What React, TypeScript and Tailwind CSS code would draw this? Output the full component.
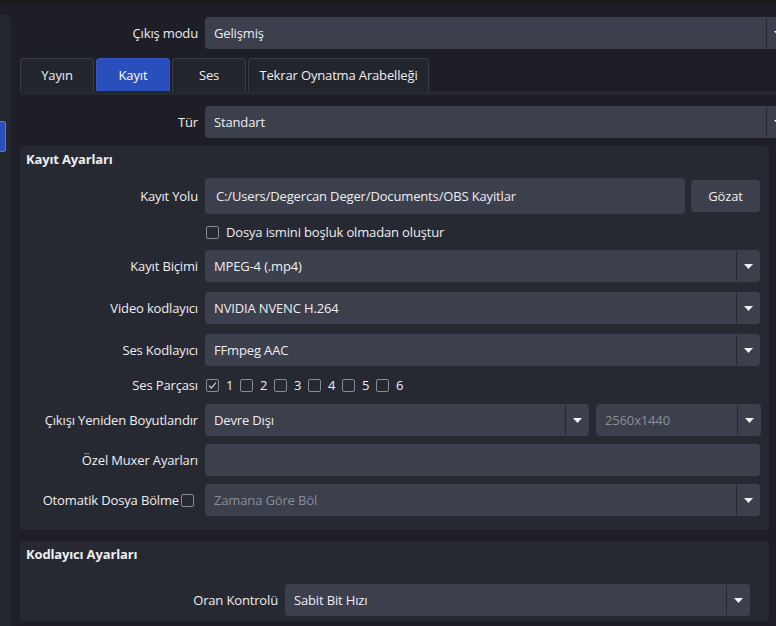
import React from "react";

const FONT = "font-['Open_Sans','Noto_Sans',sans-serif]";

function Arrow() {
  return (
    <svg width="9" height="5" viewBox="0 0 9 5">
      <path d="M0 0 H9 L4.5 5 Z" fill="#f2f2f4" />
    </svg>
  );
}

function Select({
  value,
  width,
  muted = false,
}: {
  value: string;
  width: string;
  muted?: boolean;
}) {
  return (
    <div className={`${width} h-[32px] shrink-0 rounded-[4px] bg-[#3c3f4c] flex items-center`}>
      <span className={`flex-1 pl-[9px] truncate ${muted ? "text-[#8b8e98]" : "text-[#eeeef0]"}`}>
        {value}
      </span>
      <div className="w-[24px] h-[30px] border-l border-[#262830] flex items-center justify-center">
        <Arrow />
      </div>
    </div>
  );
}

function Field({ width, value = "" }: { width: string; value?: string }) {
  return (
    <div className={`${width} h-[32px] shrink-0 rounded-[4px] bg-[#3c3f4c] flex items-center pl-[11px]`}>
      {value}
    </div>
  );
}

function Check({ checked = false }: { checked?: boolean }) {
  return (
    <div className="w-[13px] h-[13px] shrink-0 rounded-[2px] border border-[#8a8c95] flex items-center justify-center">
      {checked && (
        <svg width="11" height="11" viewBox="0 0 11 11">
          <path d="M2 5.6 L4.4 8 L9 2.6" fill="none" stroke="#c9cacf" strokeWidth="1.2" />
        </svg>
      )}
    </div>
  );
}

function Row({
  label,
  labelWidth = "w-[178px]",
  children,
  height = "h-[32px]",
  className = "",
}: {
  label: React.ReactNode;
  labelWidth?: string;
  children: React.ReactNode;
  height?: string;
  className?: string;
}) {
  return (
    <div className={`flex items-center shrink-0 ${height} ${className}`}>
      <div className={`${labelWidth} shrink-0 flex justify-end items-center`}>{label}</div>
      <div className="ml-[7px] flex items-center gap-[6px]">{children}</div>
    </div>
  );
}

function Tab({ label, active = false, width }: { label: string; active?: boolean; width: string }) {
  return (
    <div
      className={`${width} h-[33px] rounded-t-[4px] flex items-center justify-center ${
        active
          ? "bg-[#2a4fbd] border border-b-0 border-[#3556c4] text-white"
          : "bg-[#23252d] border border-b-0 border-[#3a3d48] text-[#eeeef0]"
      }`}
    >
      {label}
    </div>
  );
}

export default function App() {
  const tracks = ["1", "2", "3", "4", "5", "6"];
  return (
    <div
      className={`w-[776px] h-[626px] overflow-hidden bg-[#1e1f26] text-[#eeeef0] text-[13px] leading-[18px] tracking-[-0.15px] ${FONT} flex flex-col`}
    >
      <div className="h-[4px] shrink-0 bg-[#1a1d1e]" />
      <div className="flex flex-1 min-h-0">
        {/* sidebar edge with the selected page marker */}
        <aside className="w-[11px] shrink-0 mt-[11px] bg-[#25272f] rounded-tr-[4px]">
          <div className="mt-[106px] w-[6px] h-[31px] bg-[#2a4fbd] border border-l-0 border-[#5677de] rounded-r-[3px]" />
        </aside>

        <main className="w-[779px] shrink-0 pl-[9px] flex flex-col">
          {/* output mode */}
          <div className="mt-[13px]">
            <Row label="Çıkış modu">
              <Select value="Gelişmiş" width="w-[585px]" />
            </Row>
          </div>

          {/* tabs */}
          <div className="mt-[9px] flex gap-[2px]">
            <Tab label="Yayın" width="w-[74px]" />
            <Tab label="Kayıt" width="w-[74px]" active />
            <Tab label="Ses" width="w-[74px]" />
            <Tab label="Tekrar Oynatma Arabelleği" width="w-[181px]" />
          </div>
          <div className="h-[4px] bg-[#26282f]" />

          <div className="mt-[11px]">
            <Row label="Tür">
              <Select value="Standart" width="w-[585px]" />
            </Row>
          </div>

          {/* recording settings */}
          <section className="mt-[8px] w-[749px] h-[384px] rounded-[4px] bg-[#272932] pt-[4px]">
            <div className="pl-[6px] font-bold">Kayıt Ayarları</div>
            <div className="mt-[10px] flex flex-col">
              <Row label="Kayıt Yolu" height="h-[36px]">
                <div className="w-[480px] h-[36px] rounded-[4px] bg-[#3c3f4c] flex items-center pl-[11px]">
                  C:/Users/Degercan Deger/Documents/OBS Kayitlar
                </div>
                <div className="w-[69px] h-[32px] rounded-[4px] bg-[#3c3f4c] flex items-center justify-center">
                  Gözat
                </div>
              </Row>
              <Row label="" height="h-[16px]" className="mt-[10px]">
                <div className="flex items-center gap-[7px] pl-[1px]">
                  <Check />
                  <span>Dosya ismini boşluk olmadan oluştur</span>
                </div>
              </Row>
              <Row label="Kayıt Biçimi" className="mt-[10px]">
                <Select value="MPEG-4 (.mp4)" width="w-[555px]" />
              </Row>
              <Row label="Video kodlayıcı" className="mt-[10px]">
                <Select value="NVIDIA NVENC H.264" width="w-[555px]" />
              </Row>
              <Row label="Ses Kodlayıcı" className="mt-[10px]">
                <Select value="FFmpeg AAC" width="w-[555px]" />
              </Row>
              <Row label="Ses Parçası" height="h-[18px]" className="mt-[10px]">
                <div className="flex items-center pl-[1px]">
                  {tracks.map((t, i) => (
                    <div key={t} className="flex items-center w-[34px]">
                      <Check checked={i === 0} />
                      <span className="ml-[7px]">{t}</span>
                    </div>
                  ))}
                </div>
              </Row>
              <Row label="Çıkışı Yeniden Boyutlandır" className="mt-[10px]">
                <Select value="Devre Dışı" width="w-[384px]" />
                <div className="ml-[1px]">
                  <Select value="2560x1440" width="w-[165px]" muted />
                </div>
              </Row>
              <Row label="Özel Muxer Ayarları" className="mt-[8px]">
                <Field width="w-[555px]" />
              </Row>
              <Row
                className="mt-[8px]"
                label={
                  <div className="flex items-center gap-[2px] pr-[4px]">
                    <span>Otomatik Dosya Bölme</span>
                    <Check />
                  </div>
                }
              >
                <Select value="Zamana Göre Böl" width="w-[555px]" muted />
              </Row>
            </div>
          </section>

          {/* encoder settings */}
          <section className="mt-[11px] w-[749px] h-[80px] shrink-0 rounded-[4px] bg-[#272932] pt-[4px]">
            <div className="pl-[6px] font-bold">Kodlayıcı Ayarları</div>
            <div className="mt-[21px]">
              <Row label="Oran Kontrolü" labelWidth="w-[258px]">
                <Select value="Sabit Bit Hızı" width="w-[465px]" />
              </Row>
            </div>
          </section>
        </main>
      </div>
    </div>
  );
}
